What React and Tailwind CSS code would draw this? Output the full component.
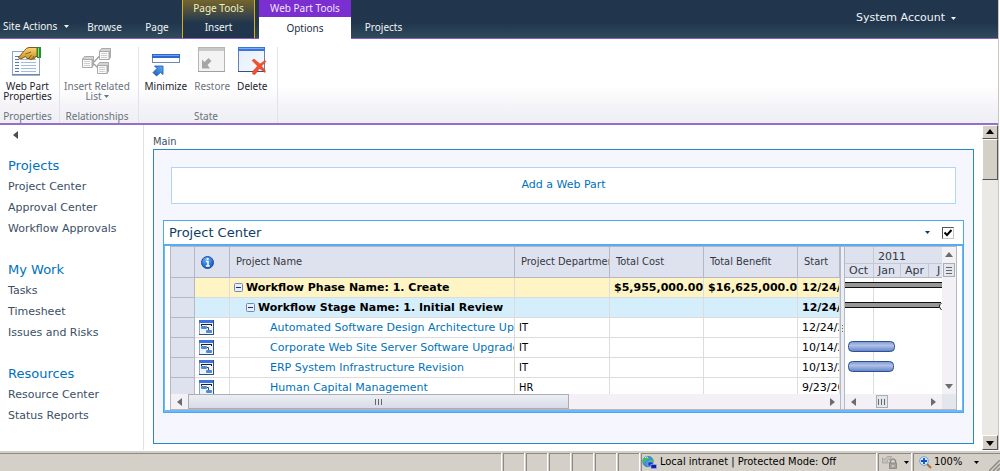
import React from "react";

const NAV = [
  { title: "Projects", items: ["Project Center", "Approval Center", "Workflow Approvals"] },
  { title: "My Work", items: ["Tasks", "Timesheet", "Issues and Risks"] },
  { title: "Resources", items: ["Resource Center", "Status Reports"] },
];

const PROJECTS = [
  { name: "Automated Software Design Architecture Upgrade", dept: "IT", start: "12/24/2010" },
  { name: "Corporate Web Site Server Software Upgrade", dept: "IT", start: "10/14/2010" },
  { name: "ERP System Infrastructure Revision", dept: "IT", start: "10/13/2010" },
  { name: "Human Capital Management", dept: "HR", start: "9/23/2010" },
];

/* ---------- icons ---------- */

function Caret({ className = "" }) {
  return (
    <svg width="5" height="3" viewBox="0 0 5 3" className={className} aria-hidden="true">
      <path d="M0 0h5L2.5 3z" fill="currentColor" />
    </svg>
  );
}

function Arrow({ dir, className = "" }) {
  const d = {
    up: "M4 1l4 5H0z",
    down: "M0 2h8L4 7z",
    left: "M6 0v8L1 4z",
    right: "M2 0v8l5-4z",
  }[dir];
  return (
    <svg width="8" height="8" viewBox="0 0 8 8" className={className} aria-hidden="true">
      <path d={d} fill="currentColor" />
    </svg>
  );
}

function PropertiesIcon() {
  return (
    <svg width="30" height="30" viewBox="0 0 30 30" aria-hidden="true">
      <defs>
        <linearGradient id="hand" x1="0" y1="0" x2="0" y2="1">
          <stop offset="0" stopColor="#fbd777" />
          <stop offset="1" stopColor="#c98a1d" />
        </linearGradient>
      </defs>
      <rect x="0.500" y="4.500" width="27" height="23" fill="#fdfdff" stroke="#8fa6c6" />
      <path d="M0 28h28" stroke="#4c678f" />
      {[8, 11, 14, 17, 20, 23].map((y) => (
        <g key={y}>
          <path d={`M3 ${y + 1.5}h4`} stroke="#4f79b8" />
          <path d={`M9 ${y + 1.5}h15`} stroke="#a3bbdc" />
        </g>
      ))}
      <path
        d="M6.500 10.500L12.500 3.500Q14.500 0.500 17 0.500H25V9.500H23.500Q23 12.500 20.500 12Q18.500 13.500 17 11.500Q14.500 12.500 13.500 9.500L9 12Q7 12.500 6.500 10.500Z"
        fill="url(#hand)"
        stroke="#6d4c12"
        strokeWidth="0.9"
      />
      <path d="M13.500 7l5.500-2M17 11l2.500-3M20.500 11.500l1.500-2.500" stroke="#7d5716" strokeWidth="0.9" fill="none" />
      <rect x="25" y="0" width="4" height="11" fill="#23902b" />
      <rect x="26" y="1" width="1" height="9" fill="#8ddc7b" />
    </svg>
  );
}

function RelatedBox({ x, y }) {
  return (
    <g transform={`translate(${x} ${y})`}>
      <path d="M0.500 3L2.500 0.500H11.500V9L10 11.500H0.500z" fill="#d4d4d4" stroke="#a9a9a9" />
      <rect x="1" y="3" width="8" height="8" fill="#fafafa" />
      <path d="M1 3.500h9.500v8" stroke="#a9a9a9" fill="none" />
      <path d="M2 5.500h6M2 7.500h6M2 9.500h6" stroke="#cfcfcf" />
    </g>
  );
}

function RelatedIcon() {
  return (
    <svg width="30" height="30" viewBox="0 0 30 30" aria-hidden="true">
      <path d="M12 15L18 8.500M12 17l4 4" stroke="#9b9b9b" strokeWidth="1.200" fill="none" />
      <RelatedBox x={0} y={9} />
      <RelatedBox x={17} y={1} />
      <RelatedBox x={15} y={15} />
    </svg>
  );
}

function MinimizeIcon() {
  return (
    <svg width="30" height="30" viewBox="0 0 30 30" aria-hidden="true">
      <defs>
        <linearGradient id="min-arrow" x1="1" y1="0" x2="0" y2="1">
          <stop offset="0" stopColor="#5cb0f5" />
          <stop offset="1" stopColor="#1a57c0" />
        </linearGradient>
      </defs>
      <rect x="1.500" y="7.500" width="27" height="8" fill="#fff" stroke="#6f88ae" />
      <rect x="1" y="7" width="28" height="4" fill="#2f67d0" />
      <rect x="2" y="8" width="26" height="1" fill="#6fa2ee" />
      <path d="M3.500 19h8.500v8.500l-2.500-2L5.500 29 2 25.500l4-4z" fill="url(#min-arrow)" stroke="#1a57b5" strokeWidth="0.8" />
    </svg>
  );
}

function RestoreIcon() {
  return (
    <svg width="30" height="30" viewBox="0 0 30 30" aria-hidden="true">
      <rect x="1.500" y="0.500" width="26" height="24" fill="#f3f3f3" stroke="#b5b5b5" />
      <rect x="2" y="1" width="25" height="3" fill="#c9c9c9" />
      <path d="M1 24.500h27" stroke="#a0a0a0" />
      <path d="M5 21.500V12.500l2.500 2.500 4-4 3 3-4 4L13 21.500z" fill="#a6a6a6" />
    </svg>
  );
}

function DeleteIcon() {
  return (
    <svg width="30" height="30" viewBox="0 0 30 30" aria-hidden="true">
      <defs>
        <linearGradient id="page" x1="0" y1="0" x2="1" y2="1">
          <stop offset="0" stopColor="#e3edfd" />
          <stop offset="1" stopColor="#f8fbff" />
        </linearGradient>
      </defs>
      <rect x="1.500" y="0.500" width="26" height="24" fill="url(#page)" stroke="#6481ad" />
      <rect x="1" y="0" width="27" height="4" fill="#3a75da" />
      <rect x="2" y="1" width="25" height="1" fill="#7facf2" />
      <path d="M1 24.500h27" stroke="#33527f" />
      <path
        d="M15 13.500l2-1.500 6 5 5-3.500 1 1L24.500 19l4 5-.5 1.500-5.500-4-4.500 6-2.500-.5 .5-3 4.500-5z"
        fill="#f2502c"
        stroke="#d9381b"
        strokeWidth="0.5"
      />
    </svg>
  );
}

function InfoIcon() {
  return (
    <svg width="13" height="13" viewBox="0 0 13 13" role="img" aria-label="Information">
      <defs>
        <radialGradient id="ball" cx="0.400" cy="0.250" r="0.800">
          <stop offset="0" stopColor="#6db4f5" />
          <stop offset="1" stopColor="#0b4fb8" />
        </radialGradient>
      </defs>
      <circle cx="6.500" cy="6.500" r="6" fill="url(#ball)" stroke="#1a4fa3" />
      <path d="M5 5.500h2V10M4.800 10h4" stroke="#fff" strokeWidth="1.500" fill="none" />
      <circle cx="6.700" cy="3" r="1.100" fill="#fff" />
    </svg>
  );
}

function ProjectIcon() {
  return (
    <svg width="15" height="15" viewBox="0 0 15 15" className="block" role="img" aria-label="Project">
      <rect x="0.500" y="0.500" width="14" height="14" fill="#eef4ff" stroke="#8aa4cf" />
      <rect x="0" y="0" width="15" height="3" fill="#3a70e0" />
      <path d="M0 14.500h15M14.500 0v15" stroke="#31507f" />
      <path d="M2 4.500h11M2.500 4v2M12.500 4v2" stroke="#222" />
      <rect x="2" y="6" width="6" height="3" rx="1" fill="#4f8acb" />
      <path d="M8 7.500h1.500v2.500" stroke="#444" fill="none" />
      <rect x="7" y="10" width="6" height="3" rx="1" fill="#4f8acb" />
    </svg>
  );
}

function CollapseIcon() {
  return (
    <svg width="9" height="9" viewBox="0 0 9 9" aria-hidden="true">
      <rect x="0.500" y="0.500" width="8" height="8" rx="1" fill="#e9eefb" stroke="#7187b5" />
      <path d="M2 4.500h5" stroke="#16305f" />
    </svg>
  );
}

function GlobeIcon() {
  return (
    <svg width="16" height="14" viewBox="0 0 16 14" aria-hidden="true">
      <circle cx="6" cy="5.500" r="5.300" fill="#3b94e8" stroke="#1b5fb0" strokeWidth="0.600" />
      <path d="M2 2q3-2 5 0-1 2-3 2.500T2 8Q0 5 2 2zM8 4l3-1q1 3-1 5L7 7z" fill="#43c046" />
      <path d="M3 1.500q2-1 3 0" stroke="#e6fbff" />
      <rect x="6" y="6" width="5" height="4" fill="#1738b8" stroke="#9fb6f0" strokeWidth="0.600" />
      <rect x="9" y="8.500" width="5.500" height="4" fill="#0e1fa8" stroke="#9fb6f0" strokeWidth="0.600" />
    </svg>
  );
}

function LockIcon() {
  return (
    <svg width="16" height="15" viewBox="0 0 16 15" aria-hidden="true">
      <path d="M0.500 8V3l2 1.500Q5 0 9.500 1.500L8 4.500Q6 3.500 5 6L6.500 8z" fill="#c4c2be" stroke="#979590" strokeWidth="0.600" />
      <path d="M8.500 8V5.500q2.500-3 5 0V8" stroke="#8d8b87" strokeWidth="1.300" fill="none" />
      <rect x="7.500" y="8" width="7" height="5.500" fill="#a5a39e" stroke="#7f7d79" strokeWidth="0.700" />
      <path d="M11 10v2" stroke="#eee" />
    </svg>
  );
}

function ZoomIcon() {
  return (
    <svg width="13" height="13" viewBox="0 0 13 13" aria-hidden="true">
      <path d="M8 8l4 4" stroke="#b06f2c" strokeWidth="2.200" />
      <circle cx="5" cy="5" r="4.300" fill="#d9ecff" stroke="#6d9fd6" />
      <path d="M5 2v6M2 5h6" stroke="#0d4fc4" strokeWidth="1.800" />
    </svg>
  );
}

/* ---------- header ---------- */

function TopBar() {
  const tab = "flex h-[21px] items-center justify-center";
  return (
    <header className="flex h-[39px] border-b border-[#8a5cc6] bg-linear-to-b from-[#21364d] from-60% to-[#304a5b] text-[10px] text-[#f1f4f7] font-['Noto_Sans','Open_Sans',sans-serif]">
      <div className="flex items-end">
        <button type="button" className="flex h-[24px] w-[69px] items-center justify-between pl-[3px] leading-[20px]">
          Site Actions <Caret />
        </button>
        <a href="#browse" className={`${tab} w-[71px]`}>Browse</a>
        <a href="#page" className={`${tab} w-[34px]`}>Page</a>
      </div>
      <div className="ml-[8px] flex w-[73px] shrink-0 flex-col justify-between border-x border-[#d9ae12] bg-linear-to-b from-[#75652a] to-[#21364d] to-60%">
        <span className="block h-[17px] text-center leading-[16px] text-[#f5efb5]">Page Tools</span>
        <a href="#insert" className={tab}>Insert</a>
      </div>
      <div className="-mb-px ml-[4px] flex w-[92px] shrink-0 flex-col bg-white">
        <span className="block h-[17px] bg-[#7b2fd0] text-center leading-[16px] text-[#f1e4ff]">Web Part Tools</span>
        <a href="#options" className="flex flex-1 items-center justify-center text-[#22303f]">Options</a>
      </div>
      <div className="flex items-end">
        <a href="#projects" className={`${tab} w-[65px]`}>Projects</a>
      </div>
      <button type="button" className="mr-[42px] ml-auto flex h-[36px] items-center gap-1.5 text-[11px] font-['DejaVu_Sans',sans-serif]">
        System Account <Caret />
      </button>
    </header>
  );
}

function RibbonButton({ icon, lines, disabled, menu }) {
  return (
    <button
      type="button"
      disabled={disabled}
      className={`flex flex-col items-center gap-1 ${disabled ? "text-[#6a727c]" : "text-[#1c242e]"}`}
    >
      {icon}
      <span className="flex flex-col items-center leading-[10px] whitespace-nowrap">
        <span>{lines[0]}</span>
        {lines[1] && (
          <span className="flex items-center gap-0.5">
            {lines[1]}
            {menu && <Caret />}
          </span>
        )}
      </span>
    </button>
  );
}

function RibbonGroup({ label, width, children }) {
  return (
    <section aria-label={label} className={`flex shrink-0 flex-col justify-between border-r border-[#e1e3ea] ${width}`}>
      <div className="flex justify-center gap-[7px]">{children}</div>
      <h2 className="text-center leading-[13px] text-[#6a727c]">{label}</h2>
    </section>
  );
}

function Ribbon() {
  return (
    <div className="flex h-[86px] border-b-2 border-[#9470cc] bg-linear-to-b from-white from-55% via-[#f5f3f7] via-80% to-[#eef0f4] pt-[8px] text-[10px] font-['Noto_Sans','Open_Sans',sans-serif]">
      <RibbonGroup label="Properties" width="w-[60px] pr-1">
        <RibbonButton icon={<PropertiesIcon />} lines={["Web Part", "Properties"]} />
      </RibbonGroup>
      <RibbonGroup label="Relationships" width="w-[79px] pr-1">
        <RibbonButton icon={<RelatedIcon />} lines={["Insert Related", "List"]} disabled menu />
      </RibbonGroup>
      <RibbonGroup label="State" width="w-[139px] pr-1">
        <RibbonButton icon={<MinimizeIcon />} lines={["Minimize"]} />
        <RibbonButton icon={<RestoreIcon />} lines={["Restore"]} disabled />
        <RibbonButton icon={<DeleteIcon />} lines={["Delete"]} />
      </RibbonGroup>
    </div>
  );
}

/* ---------- side navigation ---------- */

function SideNav() {
  return (
    <nav className="w-[144px] shrink-0 border-r border-[#dfe3e8] pl-[8px]">
      <button type="button" aria-label="Collapse navigation" className="flex h-[30px] items-start pt-[6px] pl-[4px] text-[#4d4d4d]">
        <Arrow dir="left" />
      </button>
      {NAV.map((g) => (
        <section key={g.title} className="mb-5">
          <h2 className="text-[13px] leading-[21px] text-[#0072bc]">{g.title}</h2>
          <ul>
            {g.items.map((i) => (
              <li key={i} className="leading-[21px]">
                <a href="#nav" className="text-[#3b4f65]">{i}</a>
              </li>
            ))}
          </ul>
        </section>
      ))}
    </nav>
  );
}

/* ---------- project grid ---------- */

const cell = "h-[20px] overflow-hidden border-r border-b border-[#dcdcdc] py-0 pr-0 pl-[4px] whitespace-nowrap";
const stub = "h-[20px] border-r border-b border-[#b4b8c4] bg-[#dee1ee] p-0";

function GroupRow({ label, indent, bg, cost, benefit, start }) {
  return (
    <tr className={`font-bold ${bg}`}>
      <td className={stub} />
      <td className={cell} />
      <td className={cell}>
        <button type="button" className={`flex items-center gap-[3px] font-bold ${indent}`}>
          <CollapseIcon />
          {label}
        </button>
      </td>
      <td className={cell} />
      <td className={cell}>{cost}</td>
      <td className={cell}>{benefit}</td>
      <td className={cell}>{start}</td>
    </tr>
  );
}

function ProjectTable() {
  const th = "h-[31px] overflow-hidden border-r border-b border-[#b4b8c4] py-0 pr-0 pl-[6px] text-left font-normal whitespace-nowrap text-[#33383f]";
  return (
    <div className="min-h-0 flex-1 overflow-hidden">
      <table className="w-full table-fixed border-separate border-spacing-0 leading-[16px] text-black">
        <colgroup>
          <col className="w-[24px]" />
          <col className="w-[35px]" />
          <col />
          <col className="w-[95px]" />
          <col className="w-[94px]" />
          <col className="w-[94px]" />
          <col className="w-[42px]" />
        </colgroup>
        <thead className="bg-[#dee1ee] font-['DejaVu_Sans_Condensed','DejaVu_Sans',sans-serif] text-[11px]">
          <tr>
            <th className={th} />
            <th className={th}>
              <InfoIcon />
            </th>
            <th className={th}>Project Name</th>
            <th className={th}>Project Department</th>
            <th className={th}>Total Cost</th>
            <th className={th}>Total Benefit</th>
            <th className={th}>Start</th>
          </tr>
        </thead>
        <tbody>
          <GroupRow label="Workflow Phase Name: 1. Create" indent="" bg="bg-[#fef4c4]" cost="$5,955,000.00" benefit="$16,625,000.00" start="12/24/2010" />
          <GroupRow label="Workflow Stage Name: 1. Initial Review" indent="pl-[12px]" bg="bg-[#d5eefc]" start="12/24/2010" />
          {PROJECTS.map((p) => (
            <tr key={p.name} className="bg-white">
              <td className={stub} />
              <td className={cell}><ProjectIcon /></td>
              <td className={cell}>
                <a href="#project" className="pl-[36px] text-[#0072bc]">{p.name}</a>
              </td>
              <td className={`${cell} font-['DejaVu_Sans_Condensed','DejaVu_Sans',sans-serif]`}>{p.dept}</td>
              <td className={cell} />
              <td className={cell} />
              <td className={cell}>{p.start}</td>
            </tr>
          ))}
        </tbody>
      </table>
    </div>
  );
}

function Grip({ vertical }) {
  return (
    <span className={`flex gap-[2px] ${vertical ? "flex-col" : ""}`}>
      {[0, 1, 2].map((i) => (
        <i key={i} className={`bg-[#666] ${vertical ? "h-px w-[6px]" : "h-[6px] w-px"}`} />
      ))}
    </span>
  );
}

function GanttChart() {
  const head = "border-r border-[#c4c8d4] pl-[4px]";
  return (
    <div className="flex w-[97px] shrink-0 flex-col">
      <div className="flex min-h-0 flex-1 flex-col overflow-hidden bg-white">
        <div className="h-[31px] shrink-0 overflow-hidden border-b border-[#b4b8c4] bg-[#dee1ee] whitespace-nowrap text-[#33383f]">
          <div className="grid h-[17px] grid-cols-[29px_auto] border-b border-[#c4c8d4] leading-[20px]">
            <span className="border-r border-[#c4c8d4]" />
            <span className="pl-[4px]">2011</span>
          </div>
          <div className="grid grid-cols-[29px_27px_28px_auto] leading-[13px]">
            <span className={head}>Oct</span>
            <span className={head}>Jan</span>
            <span className={head}>Apr</span>
            <span className="pl-[8px]">J</span>
          </div>
        </div>
        <svg width="97" height="118" viewBox="0 0 97 118" className="shrink-0" role="img" aria-label="Project schedule">
          <defs>
            <linearGradient id="task" x1="0" y1="0" x2="0" y2="1">
              <stop offset="0" stopColor="#7f98d2" />
              <stop offset="0.400" stopColor="#b0c0e6" />
              <stop offset="1" stopColor="#6282c5" />
            </linearGradient>
          </defs>
          <path d="M28.500 0v118" stroke="#dcdcdc" />
          <rect x="0" y="4" width="97" height="6" fill="#969696" />
          <path d="M0 4.500h97M0 9.500h97" stroke="#111" />
          <rect x="0" y="24" width="95" height="6" fill="#969696" />
          <path d="M0 24.500h96M0 29.500h94M96.500 25q-4 3 0 7" stroke="#111" fill="none" />
          <rect x="3.500" y="63.500" width="46" height="10" rx="4" fill="url(#task)" stroke="#2a5298" />
          <rect x="3.500" y="83.500" width="45" height="10" rx="4" fill="url(#task)" stroke="#2a5298" />
        </svg>
      </div>
      <div className="flex h-[15px] shrink-0 items-center justify-between bg-[#f3f0f6] px-[5px] text-[#6c6c6c]">
        <button type="button" aria-label="Scroll chart left"><Arrow dir="left" /></button>
        <span className="mr-6 flex h-[13px] w-[12px] items-center justify-center border border-[#a9adb8] bg-[#e4e6ee]"><Grip /></span>
        <button type="button" aria-label="Scroll chart right"><Arrow dir="right" /></button>
      </div>
    </div>
  );
}

function ProjectCenter() {
  return (
    <section aria-label="Project Center" className="mx-[9px] border border-[#4ea6f2] bg-white">
      <div className="flex h-[25px] items-center border-b-2 border-[#55abf5] pr-[9px] pl-[5px]">
        <h2 className="flex-1 text-[13px] text-[#0d3d66]">Project Center</h2>
        <button type="button" aria-label="Web part menu" className="mr-3 text-[#0d3d66]"><Caret /></button>
        <label className="grid size-[12px] place-items-center">
          <input
            type="checkbox"
            defaultChecked
            aria-label="Select Project Center web part"
            className="peer col-start-1 row-start-1 size-[12px] appearance-none border border-t-[#555] border-r-[#c8c8c8] border-b-[#c8c8c8] border-l-[#555] bg-white"
          />
          <svg width="8" height="8" viewBox="0 0 8 8" className="pointer-events-none invisible col-start-1 row-start-1 peer-checked:visible" aria-hidden="true">
            <path d="M0.500 3.500l2.500 2.500L7.500 1" stroke="#000" strokeWidth="2" fill="none" />
          </svg>
        </label>
      </div>
      <div className="flex h-[166px] border-x border-b-2 border-[#6fb8f8] px-[5px]">
        <div className="flex min-w-0 flex-1 border border-[#b4b8c4]">
          <div className="flex min-w-0 flex-1 flex-col">
            <ProjectTable />
            <div className="flex h-[15px] shrink-0 items-center bg-[#f3f0f6] text-[#6c6c6c]">
              <button type="button" aria-label="Scroll grid left" className="flex w-[17px] justify-center"><Arrow dir="left" /></button>
              <div className="flex h-full flex-1">
                <span className="flex w-[60%] items-center justify-center border border-[#a9adb8] bg-linear-to-b from-[#eceef4] to-[#d9dce6]"><Grip /></span>
              </div>
              <button type="button" aria-label="Scroll grid right" className="flex w-[17px] justify-center"><Arrow dir="right" /></button>
            </div>
          </div>
          <div className="flex w-[5px] shrink-0 flex-col items-center justify-center gap-[2px] border-x border-[#b4b8c4] bg-[#eceef5]">
            {[0, 1, 2].map((i) => <i key={i} className="size-px bg-[#666]" />)}
          </div>
          <GanttChart />
          <div className="flex w-[14px] shrink-0 flex-col items-center bg-[#f3f0f6] text-[#6c6c6c]">
            <button type="button" aria-label="Scroll up" className="flex h-[16px] items-center"><Arrow dir="up" /></button>
            <span className="flex h-[14px] w-[12px] items-center justify-center border border-[#a9adb8] bg-[#e4e6ee]"><Grip vertical /></span>
            <button type="button" aria-label="Scroll down" className="mt-auto flex h-[16px] items-center"><Arrow dir="down" /></button>
            <span className="h-[15px] w-full bg-[#e4e6ee]" />
          </div>
        </div>
      </div>
    </section>
  );
}

/* ---------- window chrome ---------- */

const bevel = "border border-t-white border-r-[#555] border-b-[#555] border-l-white bg-[#d4d0c8]";

function WindowScrollbar() {
  return (
    <div className="flex w-[16px] shrink-0 flex-col bg-[#ebe9e5] text-black">
      <button type="button" aria-label="Scroll page up" className={`flex h-[14px] items-center justify-center ${bevel}`}><Arrow dir="up" /></button>
      <span className={`h-[41px] ${bevel}`} />
      <button type="button" aria-label="Scroll page down" className={`mt-auto flex h-[15px] items-center justify-center ${bevel}`}><Arrow dir="down" /></button>
    </div>
  );
}

function StatusBar() {
  const pane = "h-[18px] shrink-0 border-t border-l border-[#8d8a84] shadow-[1px_0_0_#fff]";
  return (
    <footer className="flex h-[21px] items-end gap-[2px] border-t border-white bg-[#d4d0c8] text-[11px] text-black font-['DejaVu_Sans_Condensed','DejaVu_Sans',sans-serif]">
      <span className="h-[18px] flex-1 border-t border-[#8d8a84] shadow-[1px_0_0_#fff]" />
      {[0, 1, 2, 3, 4, 5].map((i) => <span key={i} className={`w-[21px] ${pane}`} />)}
      <span className={`flex w-[235px] items-center gap-[2px] ${pane}`}>
        <GlobeIcon />
        Local intranet | Protected Mode: Off
      </span>
      <button type="button" aria-label="Security report" className={`flex w-[33px] items-center gap-1.5 pl-[3px] ${pane}`}>
        <LockIcon /> <Caret />
      </button>
      <button type="button" className={`flex w-[87px] items-center pl-[5px] ${pane}`}>
        <ZoomIcon />
        <span className="pr-3 pl-[2px]">100%</span>
        <Caret />
        <svg width="11" height="11" viewBox="0 0 11 11" className="mt-auto ml-auto" aria-hidden="true">
          <path d="M0 11L11 0M4 11l7-7M8 11l3-3" stroke="#8d8a84" strokeWidth="1.500" />
        </svg>
      </button>
    </footer>
  );
}

export default function App() {
  return (
    <div className="flex min-h-screen flex-col bg-white text-[11px] font-['DejaVu_Sans',sans-serif]">
      <div className="mr-px flex flex-1 flex-col border-r border-[#c9c6bf]">
        <TopBar />
        <Ribbon />
        <div className="flex flex-1">
          <SideNav />
          <main className="min-w-0 flex-1 pt-[10px] pr-[8px] pb-[6px] pl-[9px]">
            <h1 className="leading-[14px] text-[#3b4f65] font-['DejaVu_Sans_Condensed','DejaVu_Sans',sans-serif]">Main</h1>
            <div className="border border-[#2c86c6] bg-[#f6f6ff] pt-[17px] pb-[30px]">
              <button type="button" className="mx-[17px] mb-4 flex h-[37px] w-[calc(100%-34px)] items-center justify-center border border-[#b0d4fa] bg-white text-[#0072bc]">
                Add a Web Part
              </button>
              <ProjectCenter />
            </div>
          </main>
          <WindowScrollbar />
        </div>
      </div>
      <StatusBar />
    </div>
  );
}
